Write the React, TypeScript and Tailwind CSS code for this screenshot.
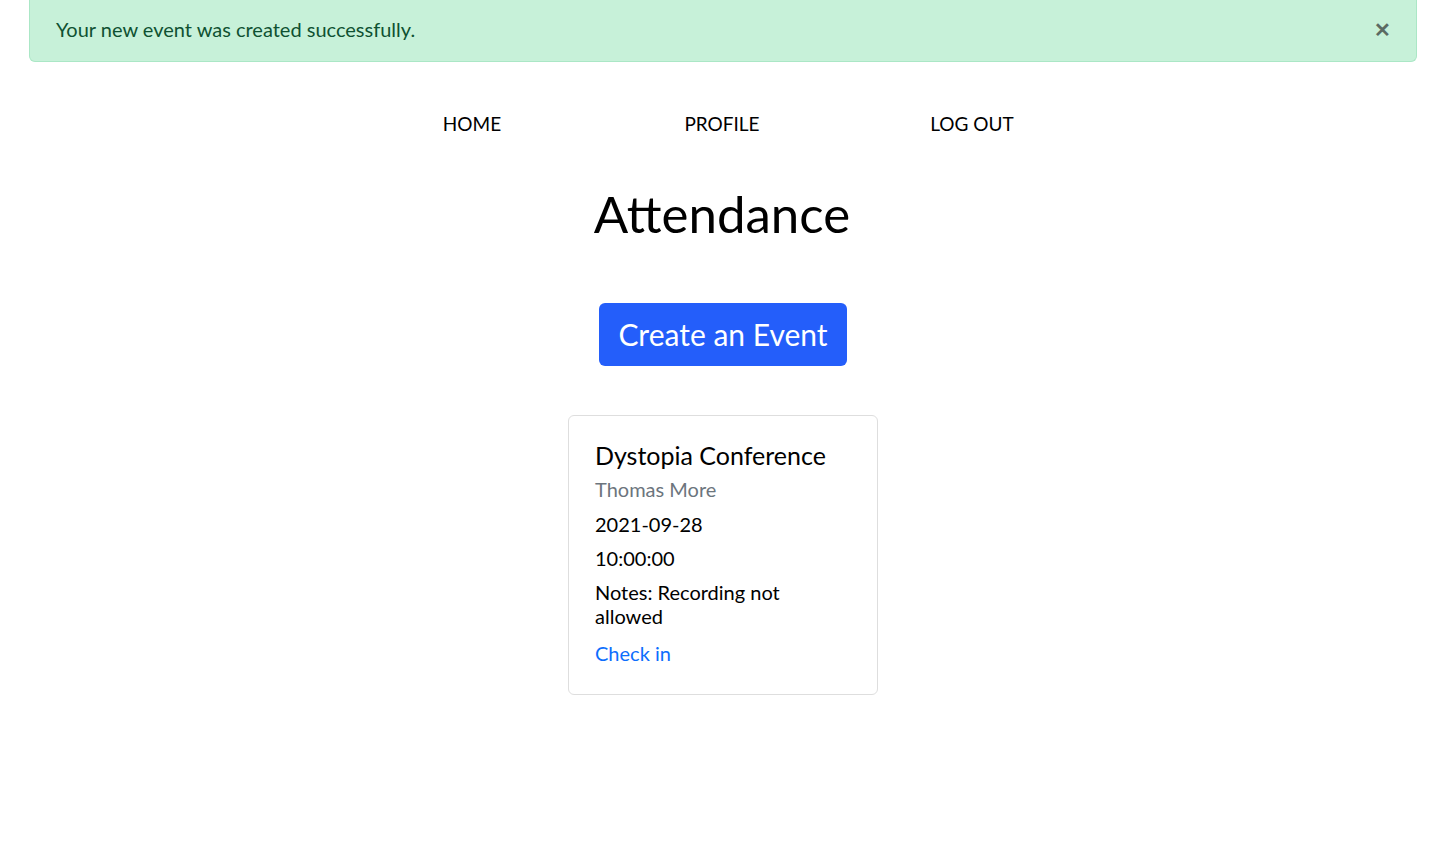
import React from 'react';

const App = () => {
  return (
    <div className="min-h-[866px] bg-white text-black font-['Lato',sans-serif]">
      <div className="pl-[29px] pr-[27px]">
        <div className="flex items-center justify-between h-[62px] pl-[26px] pr-[25px] pb-[4px] bg-[#c7f1d9] border border-t-0 border-[#abe7c6] rounded-b-md">
          <span className="text-[20px] text-[#0f5132]">Your new event was created successfully.</span>
          <button className="text-[#5b6b63] text-[20px] font-bold leading-none">✕</button>
        </div>
      </div>

      <nav className="flex justify-center mt-[48px]">
        <a className="w-[250px] text-center text-[19px] uppercase">Home</a>
        <a className="w-[250px] text-center text-[19px] uppercase">Profile</a>
        <a className="w-[250px] text-center text-[19px] uppercase">Log out</a>
      </nav>

      <h1 className="text-center text-[51px] leading-[60px] mt-[45px]">Attendance</h1>

      <div className="flex justify-center mt-[59px] pl-[2px]">
        <button className="w-[248px] h-[63px] rounded-md bg-[#245efa] text-white text-[30px]">Create an Event</button>
      </div>

      <div className="flex justify-center mt-[49px] pl-[2px]">
        <div className="w-[310px] border border-[#dedede] rounded-md px-[26px] pt-[24px] pb-[29px]">
          <h5 className="text-[25px] leading-[30px]">Dystopia Conference</h5>
          <div className="text-[20px] leading-[24px] text-[#6c757d] mt-[7px]">Thomas More</div>
          <div className="text-[20px] leading-[24px] mt-[11px]">2021-09-28</div>
          <div className="text-[20px] leading-[24px] mt-[10px]">10:00:00</div>
          <div className="text-[20px] leading-[24px] mt-[10px]">Notes: Recording not allowed</div>
          <a className="block text-[20px] leading-[24px] text-[#0d6efd] mt-[13px]">Check in</a>
        </div>
      </div>
    </div>
  );
};

export default App;
